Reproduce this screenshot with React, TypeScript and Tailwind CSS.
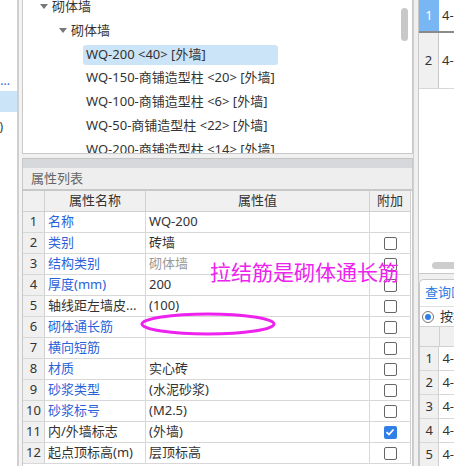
import React from 'react';

const FONT = '"Noto Sans", "Noto Sans CJK SC", sans-serif';

type Row = { name: string; blue: boolean; value: string; gray?: boolean; check: 'none' | 'off' | 'on' };

const rows: Row[] = [
  { name: '名称', blue: true, value: 'WQ-200', check: 'none' },
  { name: '类别', blue: true, value: '砖墙', check: 'off' },
  { name: '结构类别', blue: true, value: '砌体墙', gray: true, check: 'off' },
  { name: '厚度(mm)', blue: true, value: '200', check: 'off' },
  { name: '轴线距左墙皮...', blue: false, value: '(100)', check: 'off' },
  { name: '砌体通长筋', blue: true, value: '', check: 'off' },
  { name: '横向短筋', blue: true, value: '', check: 'off' },
  { name: '材质', blue: true, value: '实心砖', check: 'off' },
  { name: '砂浆类型', blue: true, value: '(水泥砂浆)', check: 'off' },
  { name: '砂浆标号', blue: true, value: '(M2.5)', check: 'off' },
  { name: '内/外墙标志', blue: false, value: '(外墙)', check: 'on' },
  { name: '起点顶标高(m)', blue: false, value: '层顶标高', check: 'off' },
];

const treeItems = [
  'WQ-150-商铺造型柱 <20> [外墙]',
  'WQ-100-商铺造型柱 <6> [外墙]',
  'WQ-50-商铺造型柱 <22> [外墙]',
  'WQ-200-商铺造型柱 <14> [外墙]',
];

function Caret() {
  return <span className="inline-block w-0 h-0 border-l-[4px] border-r-[4px] border-t-[5px] border-l-transparent border-r-transparent border-t-[#777] mr-[4px] mb-[2px]" />;
}

function CheckBox({ state }: { state: Row['check'] }) {
  if (state === 'none') return null;
  if (state === 'on')
    return (
      <div className="w-[13px] h-[13px] rounded-[2px] bg-[#2f7fe6] flex items-center justify-center">
        <svg width="10" height="10" viewBox="0 0 10 10">
          <path d="M1.5 5.2 L4 7.5 L8.5 2.5" stroke="white" strokeWidth="1.8" fill="none" />
        </svg>
      </div>
    );
  return <div className="w-[13px] h-[13px] rounded-[2px] border border-[#666] bg-white" />;
}

export default function App() {
  return (
    <div className="w-[454px] h-[466px] overflow-hidden flex bg-[#f0f0f0] text-[#333] relative" style={{ fontFamily: FONT }}>
      {/* left strip */}
      <div className="w-[17px] h-full bg-white relative overflow-hidden text-[12px]">
        <div className="h-[70px]" />
        <div className="h-[21px] flex items-center justify-end pr-[7px] whitespace-nowrap text-[#2a62d9]">墙...</div>
        <div className="h-[21px] bg-[#cce4f7]" />
        <div className="h-[30px] flex items-center justify-end pr-[14px] whitespace-nowrap">(0)</div>
      </div>
      <div className="w-[5px] h-full border-l-2 border-[#d0d0d0] bg-[#f3f3f3]" />

      {/* main column */}
      <div className="w-[391px] h-full flex flex-col">
        {/* tree */}
        <div className="h-[154px] shrink-0 bg-white border-l border-r border-b border-[#c8c8c8] relative overflow-hidden text-[13px]">
          <div className="-mt-[5px]">
            <div className="h-[24px] flex items-center pl-[17px] whitespace-nowrap"><Caret />砌体墙</div>
            <div className="h-[24px] flex items-center pl-[36px] whitespace-nowrap"><Caret />砌体墙</div>
            <div className="h-[23px] flex items-center pl-[60px]">
              <div className="w-[195px] h-[20px] rounded-[3px] bg-[#cce4f7] flex items-center pl-[3px] whitespace-nowrap">WQ-200 &lt;40&gt; [外墙]</div>
            </div>
            {treeItems.map((t) => (
              <div key={t} className="h-[24px] flex items-center pl-[63px] whitespace-nowrap">{t}</div>
            ))}
          </div>
          <div className="absolute right-[4px] top-[8px] w-[7px] h-[33px] rounded-full bg-[#c8c8c8]" />
        </div>
        <div className="h-[4px] shrink-0" />

        {/* property panel */}
        <div className="flex-1 border-l border-r border-[#c8c8c8] bg-white flex flex-col overflow-hidden">
          <div className="h-[10px] shrink-0 bg-[#d6d8dc] border-t border-[#c4c4c4]" />
          <div className="h-[23px] shrink-0 bg-[#eeeeee] border-b-2 border-[#c8c8c8] flex items-center pl-[8px] text-[13px] text-[#666]">属性列表</div>
          <div className="mr-[1px] border-r border-[#d0d0d0] text-[13px]">
            <div className="h-[21px] flex bg-[#f0f0f0] border-b border-[#d0d0d0]">
              <div className="w-[22px] border-r border-[#d0d0d0]" />
              <div className="w-[101px] border-r border-[#d0d0d0] flex items-center justify-center">属性名称</div>
              <div className="w-[224px] border-r border-[#d0d0d0] flex items-center justify-center">属性值</div>
              <div className="flex-1 flex items-center justify-center">附加</div>
            </div>
            {rows.map((r, i) => (
              <div key={i} className="h-[21px] flex border-b border-[#d8d8d8]">
                <div className="w-[22px] bg-[#f0f0f0] border-r border-[#d0d0d0] flex items-center justify-center">{i + 1}</div>
                <div className={`w-[101px] border-r border-[#d8d8d8] flex items-center pl-[3px] whitespace-nowrap overflow-hidden ${r.blue ? 'text-[#2a62d9]' : ''}`}>{r.name}</div>
                <div className={`w-[224px] border-r border-[#d8d8d8] flex items-center pl-[3px] whitespace-nowrap ${r.gray ? 'text-[#999]' : ''}`}>{r.value}</div>
                <div className="flex-1 flex items-center justify-center"><CheckBox state={r.check} /></div>
              </div>
            ))}
          </div>
        </div>
      </div>

      <div className="w-[5px] h-full border-l border-[#d0d0d0]" />

      {/* right column */}
      <div className="flex-1 h-full flex flex-col border-l border-[#c8c8c8] overflow-hidden text-[13px]">
        <div className="h-[274px] shrink-0 bg-white border-b border-[#c8c8c8] relative">
          <div className="h-[33px] flex border-b-2 border-[#8a8a8a]">
            <div className="w-[20px] bg-[#78b6f4] text-white flex items-center justify-center">1</div>
            <div className="flex items-center pl-[3px]">4-</div>
          </div>
          <div className="h-[56px] flex border-b border-[#d8d8d8]">
            <div className="w-[20px] bg-[#f0f0f0] border-r border-[#c8c8c8] flex items-center justify-center">2</div>
            <div className="flex items-center pl-[3px]">4-</div>
          </div>
          <div className="absolute left-[13px] top-[262px] w-[40px] h-[7px] rounded-full bg-[#cdcdcd]" />
        </div>
        <div className="h-[5px] shrink-0" />
        <div className="flex-1 bg-white border-l border-t border-[#c8c8c8] rounded-tl-[5px] flex flex-col">
          <div className="h-[26px] flex items-center pl-[5px] text-[#2a7ae2] whitespace-nowrap">查询匹配</div>
          <div className="h-[20px] flex items-center pl-[2px] whitespace-nowrap border-t border-[#e0e0e0]">
            <div className="w-[12px] h-[12px] rounded-full border border-[#777] flex items-center justify-center mr-[6px] shrink-0">
              <div className="w-[6px] h-[6px] rounded-full bg-[#2f7fe6]" />
            </div>
            按构件
          </div>
          <div className="h-[21px] flex bg-[#f0f0f0] border-b border-[#d0d0d0] border-t">
            <div className="w-[20px] border-r border-[#d0d0d0]" />
          </div>
          {[1, 2, 3, 4, 5].map((n) => (
            <div key={n} className="h-[24px] flex border-b border-[#d8d8d8]">
              <div className="w-[20px] bg-[#f0f0f0] border-r border-[#d0d0d0] flex items-center justify-center">{n}</div>
              <div className="flex items-center pl-[3px]">4-</div>
            </div>
          ))}
        </div>
      </div>

      {/* annotation overlay */}
      <div className="absolute left-[210px] top-[258px] text-[21px] leading-[28px] text-[#ee22ee] whitespace-nowrap">拉结筋是砌体通长筋</div>
      <svg className="absolute left-[138px] top-[311px]" width="140" height="26" viewBox="0 0 140 26">
        <ellipse cx="70" cy="13" rx="66" ry="10" stroke="#ee22ee" strokeWidth="3" fill="none" />
      </svg>
    </div>
  );
}
